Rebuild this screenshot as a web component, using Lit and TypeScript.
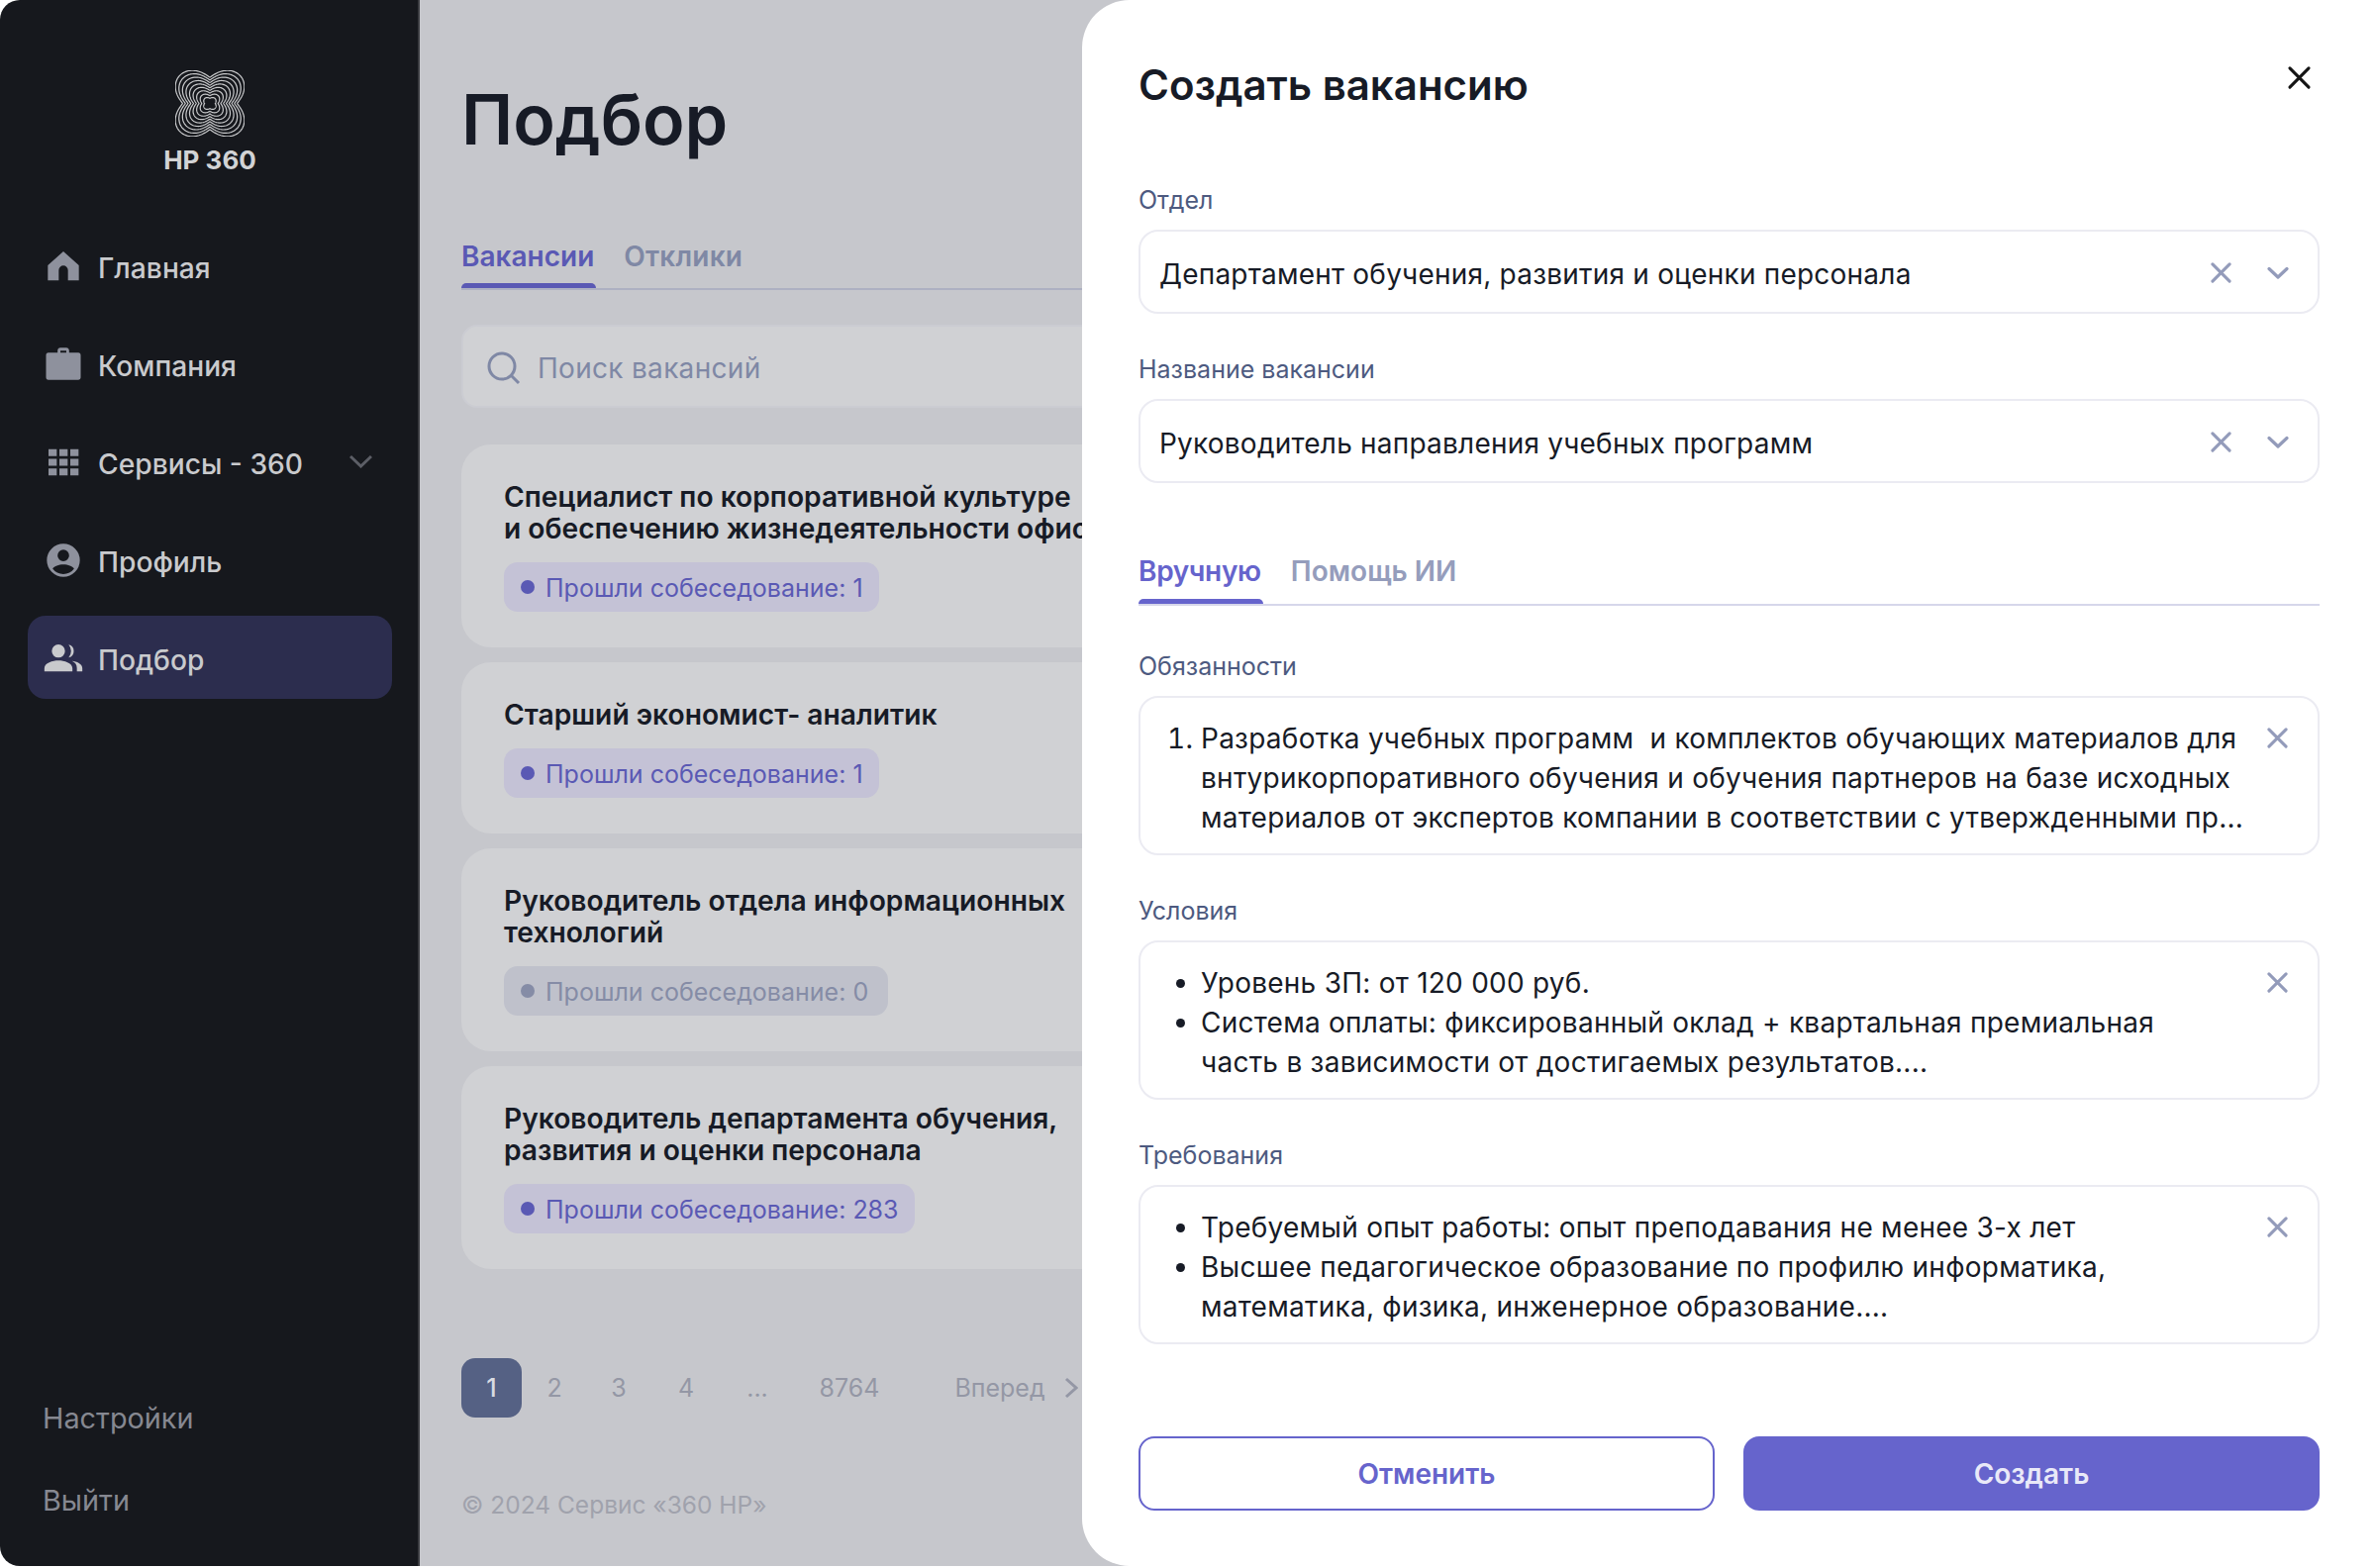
import { LitElement, html, css, svg } from "lit";
import { customElement } from "lit/decorators.js";

function ringPath(rAxis: number, rDiag: number) {
  const pts: string[] = [];
  for (let i = 0; i < 180; i++) {
    const t = (i / 180) * Math.PI * 2;
    const s = Math.pow(Math.abs(Math.sin(2 * t)), 1.2);
    const r = rAxis + (rDiag - rAxis) * s;
    pts.push(`${(r * Math.cos(t)).toFixed(2)} ${(r * Math.sin(t)).toFixed(2)}`);
  }
  return "M" + pts.join("L") + "Z";
}
const rings = Array.from({ length: 9 }, (_, i) => {
  const k = i / 8;
  return ringPath(28 - 22.5 * k, 43 - 35.5 * k);
});

const X = html`<svg class="ix" viewBox="0 0 22 22"><path d="M2 2 20 20M20 2 2 20" /></svg>`;
const CH = html`<svg class="ic" viewBox="0 0 22 14"><path d="M2 2.5 11 11 20 2.5" /></svg>`;

const navIcons: Record<string, unknown> = {
  home: svg`<path d="M2.6 11.4 12 3l9.4 8.4V20.6h-6.6v-6.2a2.8 2.8 0 0 0-5.6 0v6.2H2.600z"/>`,
  work: svg`<path d="M8.500 5V3.700C8.500 2.760 9.260 2 10.200 2h3.600c.94 0 1.700.76 1.700 1.700V5h5.600c.9 0 1.400.6 1.400 1.500V20c0 .9-.6 1.500-1.500 1.500H2.900c-.9 0-1.400-.6-1.400-1.500V6.500C1.500 5.600 2 5 2.900 5zm1.700 0h3.600V3.700h-3.600z"/>`,
  apps: svg`<path d="M3 4h5v4.200H3zM9.600 4h5v4.200h-5zM16.200 4h5v4.200h-5zM3 9.900h5v4.200H3zM9.600 9.900h5v4.200h-5zM16.200 9.900h5v4.200h-5zM3 15.800h5V20H3zM9.600 15.800h5V20h-5zM16.200 15.800h5V20h-5z"/>`,
  user: svg`<path fill-rule="evenodd" d="M12 2a10 10 0 1 1 0 20 10 10 0 0 1 0-20zm0 3.600a3.500 3.500 0 1 0 0 7 3.500 3.500 0 0 0 0-7zm0 9c-2.900 0-5.400 1-6.500 2.500a8 8 0 0 0 13 0c-1.100-1.500-3.600-2.500-6.500-2.500z"/>`,
  group: svg`<path d="M9 11.600a4 4 0 1 0 0-8 4 4 0 0 0 0 8zM9 13.400c-3.500 0-8.500 1.600-8.500 4.600v2h17v-2c0-3-5-4.600-8.500-4.600zM15.200 11.500a4 4 0 0 0 0-7.800 5.900 5.900 0 0 1 0 7.800zM17.200 13.700c2 .8 3 2.300 3 4.300v2h3.300v-2c0-2.600-3.300-4-6.300-4.300z"/>`,
};

const cards = [
  { t: html`Специалист по корпоративной культуре<br />и обеспечению жизнедеятельности офиса`, n: 1, w: 379 },
  { t: html`Старший экономист- аналитик`, n: 1, w: 379 },
  { t: html`Руководитель отдела информационных<br />технологий`, n: 0, w: 388 },
  { t: html`Руководитель департамента обучения,<br />развития и оценки персонала`, n: 283, w: 415 },
];

@customElement("app-root")
export class AppRoot extends LitElement {
  static styles = css`
    :host {
      display: block;
      width: 2400px;
      height: 1584px;
      background: #fff;
      font-family: Inter, "Noto Sans", sans-serif;
    }
    * { box-sizing: border-box; }
    .page { position: relative; display: flex; width: 2400px; height: 1582px; overflow: hidden; background: #c6c7cc; }
    .side {
      width: 424px; flex: none; background: #16181d; border-radius: 20px 0 0 20px;
      border-right: 2px solid #3a3b40;
      box-shadow: -20px 0 0 #fff;
      display: flex; flex-direction: column; padding: 71px 26px 46px 28px;
    }
    .logo { display: flex; flex-direction: column; align-items: center; padding-right: 0; }
    .logo svg { width: 70px; height: 67px; display: block; }
    .logo svg path { fill: none; stroke: #c8c9cb; stroke-width: 1.25; }
    .logo span { font-size: 26px; line-height: 34px; font-weight: 700; color: #d2d3d5; margin-top: 7px; }
    .nav { display: flex; flex-direction: column; gap: 15px; margin-top: 47px; }
    .item { height: 84px; border-radius: 18px; display: flex; align-items: center; padding: 5px 0 0 16px; color: #c9cacd; font-size: 28.2px; font-weight: 500; position: relative; }
    .item svg.ni { width: 40px; height: 40px; fill: #8e919d; margin: -4px 15px 0 0; flex: none; }
    .item.on { background: #2c2d4e; }
    .item.on svg.ni { fill: #c9cacd; }
    .item svg.chev { position: absolute; left: 325px; top: 35px; width: 23px; height: 14px; fill: none; stroke: #5c5e66; stroke-width: 3; }
    .bot { margin-top: auto; display: flex; flex-direction: column; gap: 43px; padding-left: 15px; color: #868891; font-size: 28.8px; line-height: 40px; }

    .main { flex: 1; min-width: 0; padding: 0 0 0 42px; display: flex; flex-direction: column; }
    h1 { margin: 77px 0 0; font-size: 70px; line-height: 88px; font-weight: 600; color: #171b26; }
    .tabs { display: flex; gap: 30px; margin-top: 72px; border-bottom: 2px solid #adb0c2; height: 56px; width: 1900px; font-size: 28px; font-weight: 600; letter-spacing: .2px; line-height: 44px; color: #7f88a5; }
    .tabs .a { color: #5a59b4; position: relative; letter-spacing: 0; }
    .tabs .a::after, .mtabs .a::after { content: ""; position: absolute; left: 0; right: -2px; bottom: 0; height: 5px; background: currentColor; border-radius: 5px 5px 0 0; }
    .search { width: 1900px; height: 84px; margin-top: 35px; background: #d0d1d4; border: 2px solid #cbccd2; border-radius: 16px; display: flex; align-items: center; padding: 3px 0 0 24px; font-size: 28px; letter-spacing: .3px; color: #7f88a5; }
    .search svg { width: 34px; height: 34px; margin-right: 17px; fill: none; stroke: #7f88a5; stroke-width: 3; }
    .cards { display: flex; flex-direction: column; gap: 15px; margin-top: 37px; width: 1900px; }
    .card { background: #d0d1d4; border-radius: 30px; padding: 37px 43px 36px; }
    .ct { font-size: 28.2px; line-height: 32px; font-weight: 600; color: #171b26; white-space: nowrap; }
    .badge { display: inline-flex; align-items: center; height: 50px; margin-top: 18px; border-radius: 14px; background: #c4c2d6; color: #5a59b4; font-size: 25px; padding: 2px 0 0 17px; vertical-align: top; white-space: nowrap; }
    .badge i { width: 14px; height: 14px; border-radius: 50%; background: currentColor; margin: -2px 11px 0 0; }
    .badge.z { background: #bfc1cb; color: #858ca6; }
    .pager { display: flex; align-items: center; height: 60px; margin-top: 90px; font-size: 25px; color: #9497a5; position: relative; }
    .pager b { width: 61px; height: 60px; border-radius: 14px; background: #556184; color: #d9dbe2; font-weight: 500; display: flex; align-items: center; justify-content: center; }
    .pager span { position: absolute; transform: translateX(-50%); }
    .pager svg { position: absolute; left: 609px; top: 19px; width: 14px; height: 22px; fill: none; stroke: #9497a5; stroke-width: 3; }
    .copy { margin-top: 72px; font-size: 24.5px; line-height: 32px; color: #a0a2ac; }

    .modal {
      position: absolute; left: 1093px; top: 0; right: 0; bottom: 0; background: #fff;
      border-radius: 48px 0 0 48px; padding: 0 57px; display: flex; flex-direction: column;
    }
    .mh { display: flex; justify-content: space-between; align-items: center; height: 60px; margin-top: 56px; }
    .mh h2 { margin: 0; font-size: 42px; line-height: 60px; font-weight: 600; color: #171b26; }
    .mh svg { width: 21px; height: 21px; margin: -16px 10px 0 0; fill: none; stroke: #141414; stroke-width: 3.200; stroke-linecap: round; overflow: visible; }
    label { display: block; font-size: 25px; line-height: 32px; color: #4d5a80; }
    .l1 { margin-top: 70px; }
    .inp { height: 85px; margin-top: 14px; border: 2px solid #ebebf2; border-radius: 20px; display: flex; align-items: center; padding: 2px 29px 0 19px; font-size: 28px; letter-spacing: .22px; color: #171b26; }
    .inp .tx { flex: 1; white-space: nowrap; padding-top: 2px; }
    .l2 { margin-top: 40px; }
    svg.ix { width: 21px; height: 21px; fill: none; stroke: #939bba; stroke-width: 3.200; stroke-linecap: round; flex: none; }
    svg.ic { width: 22px; height: 14px; fill: none; stroke: #939bba; stroke-width: 3.200; stroke-linecap: round; stroke-linejoin: round; margin-left: 36px; flex: none; }
    .mtabs { display: flex; gap: 30px; margin-top: 64px; padding-top: 3px; border-bottom: 2px solid #d6d7ea; height: 60px; font-size: 28px; font-weight: 600; line-height: 44px; color: #959dbc; }
    .mtabs .a { color: #6664cc; position: relative; letter-spacing: -.3px; }
    .box { height: 161px; margin-top: 14px; border: 2px solid #ebebf2; border-radius: 20px; display: flex; padding: 21px 30px 0 19px; font-size: 28px; letter-spacing: .25px; line-height: 40px; color: #171b26; }
    .box ol, .box ul { margin: 0; padding: 0 0 0 42px; flex: 1; white-space: nowrap; }
    .box svg.ix { margin-top: 9px; }
    .gap { margin-top: 40px; }
    .g0 { margin-top: 45px; }
    .btns { display: grid; grid-template-columns: 1fr 1fr; gap: 29px; margin-top: auto; margin-bottom: 56px; }
    .btns div { height: 75px; border-radius: 16px; border: 2px solid #6664cc; color: #6664cc; font-size: 28px; font-weight: 600; display: flex; align-items: center; justify-content: center; }
    .btns .p { background: #6664cc; color: #e9e9f8; }
  `;

  nav(icon: string, label: string, on = false, chev = false) {
    return html`<div class="item ${on ? "on" : ""}">
      <svg class="ni" viewBox="0 0 24 24">${navIcons[icon]}</svg>${label}
      ${chev ? html`<svg class="chev" viewBox="0 0 23 14"><path d="M1 2 11.500 12 22 2" /></svg>` : ""}
    </div>`;
  }

  render() {
    return html`<div class="page">
      <aside class="side">
        <div class="logo">
          <svg viewBox="-35.500 -35.500 71 71" preserveAspectRatio="none">${rings.map((d) => svg`<path d=${d} />`)}</svg>
          <span>HP 360</span>
        </div>
        <div class="nav">
          ${this.nav("home", "Главная")}
          ${this.nav("work", "Компания")}
          ${this.nav("apps", "Сервисы - 360", false, true)}
          ${this.nav("user", "Профиль")}
          ${this.nav("group", "Подбор", true)}
        </div>
        <div class="bot"><div>Настройки</div><div>Выйти</div></div>
      </aside>
      <main class="main">
        <h1>Подбор</h1>
        <div class="tabs"><div class="a">Вакансии</div><div>Отклики</div></div>
        <div class="search">
          <svg viewBox="0 0 34 34"><circle cx="15" cy="15" r="13" /><path d="M24.500 24.500 32 32" /></svg>
          Поиск вакансий
        </div>
        <div class="cards">
          ${cards.map(
            (c) => html`<div class="card">
              <div class="ct">${c.t}</div>
              <div class="badge ${c.n === 0 ? "z" : ""}" style="width:${c.w}px"><i></i>Прошли собеседование: ${c.n}</div>
            </div>`
          )}
        </div>
        <div class="pager">
          <b>1</b>
          <span style="left:94px">2</span><span style="left:159px">3</span><span style="left:227px">4</span>
          <span style="left:299px">...</span><span style="left:392px">8764</span><span style="left:544px">Вперед</span>
          <svg viewBox="0 0 14 22"><path d="M2 2 12 11 2 20" /></svg>
        </div>
        <div class="copy">© 2024 Сервис «360 HP»</div>
      </main>
      <section class="modal">
        <div class="mh">
          <h2>Создать вакансию</h2>
          <svg viewBox="0 0 22 22"><path d="M1 1 21 21M21 1 1 21" /></svg>
        </div>
        <label class="l1">Отдел</label>
        <div class="inp"><span class="tx">Департамент обучения, развития и оценки персонала</span>${X}${CH}</div>
        <label class="l2">Название вакансии</label>
        <div class="inp"><span class="tx">Руководитель направления учебных программ</span>${X}${CH}</div>
        <div class="mtabs"><div class="a">Вручную</div><div>Помощь ИИ</div></div>
        <label class="g0">Обязанности</label>
        <div class="box">
          <ol><li>Разработка учебных программ&nbsp; и комплектов обучающих материалов для<br />внтурикорпоративного обучения и обучения партнеров на базе исходных<br />материалов от экспертов компании в соответствии с утвержденными пр...</li></ol>
          ${X}
        </div>
        <label class="gap">Условия</label>
        <div class="box">
          <ul><li>Уровень ЗП: от 120 000 руб.</li><li>Система оплаты: фиксированный оклад + квартальная премиальная<br />часть в зависимости от достигаемых результатов....</li></ul>
          ${X}
        </div>
        <label class="gap">Требования</label>
        <div class="box">
          <ul><li>Требуемый опыт работы: опыт преподавания не менее 3-х лет</li><li>Высшее педагогическое образование по профилю информатика,<br />математика, физика, инженерное образование....</li></ul>
          ${X}
        </div>
        <div class="btns"><div>Отменить</div><div class="p">Создать</div></div>
      </section>
    </div>`;
  }
}
